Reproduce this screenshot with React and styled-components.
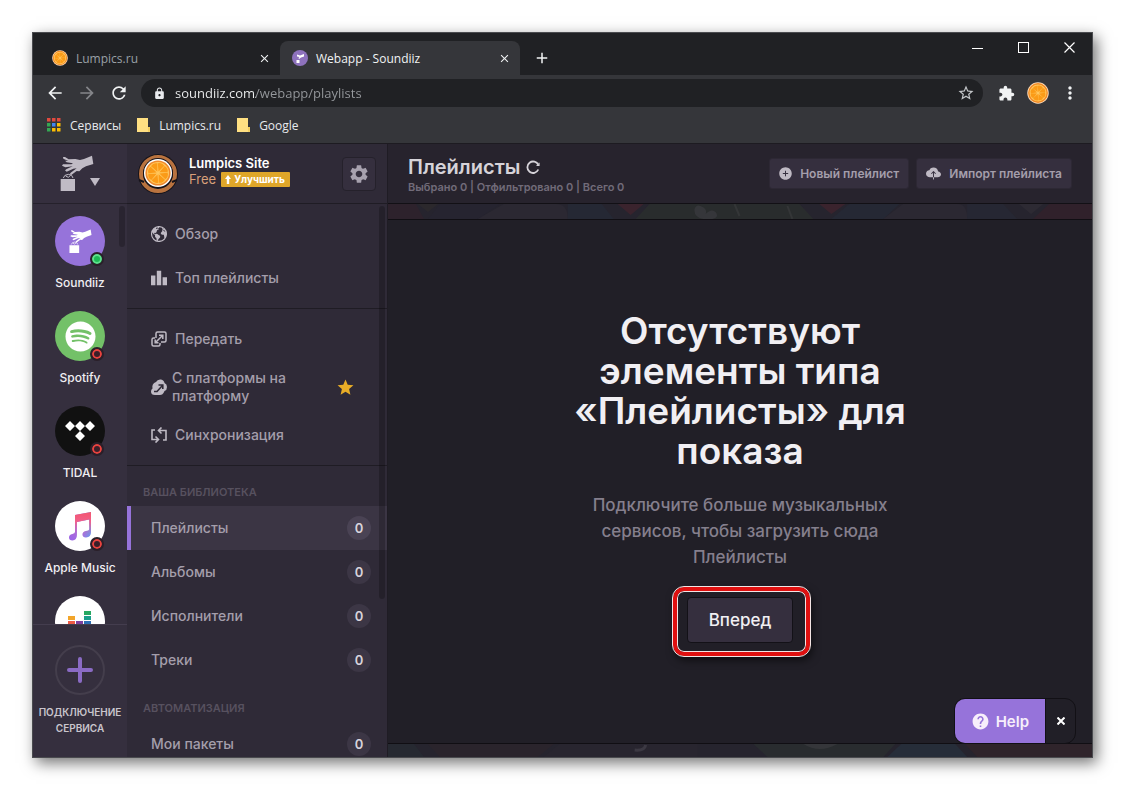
import React from "react";
import styled, { createGlobalStyle, css } from "styled-components";
import {
  MdArrowBack,
  MdArrowForward,
  MdRefresh,
  MdLock,
  MdStarBorder,
  MdExtension,
  MdMoreVert,
  MdAdd,
  MdClose,
  MdSettings,
  MdLeaderboard,
  MdStar,
  MdHelp,
} from "react-icons/md";
import { IoEarth, IoAddCircle, IoCloudUpload } from "react-icons/io5";
import { FaSpotify } from "react-icons/fa";

const GlobalStyle = createGlobalStyle`
  *, *::before, *::after {
    box-sizing: border-box;
  }
  body {
    margin: 0;
    background: #fff;
    font-family: Inter, "Liberation Sans", sans-serif;
  }
  button, input {
    font: inherit;
    color: inherit;
    border: none;
    background: none;
    padding: 0;
    margin: 0;
  }
  button {
    cursor: pointer;
  }
  a {
    color: inherit;
    text-decoration: none;
  }
  h1, h2, p, ul {
    margin: 0;
    padding: 0;
    list-style: none;
  }
  svg {
    display: block;
    flex-shrink: 0;
  }
`;

const Page = styled.div`
  height: 100vh;
  min-height: 480px;
  padding: 32px;
  display: flex;
`;

const BrowserWindow = styled.div`
  flex: 1;
  min-width: 0;
  display: flex;
  flex-direction: column;
  border: 1px solid #4a4b4f;
  background: #35363a;
  box-shadow: 4px 5px 14px rgba(0, 0, 0, 0.55);
  overflow: hidden;
`;

/* ---------- browser ---------- */

const Chrome = styled.header`
  font-family: "Open Sans", "Noto Sans", sans-serif;
  font-size: 12px;
  color: #e8eaed;
  flex-shrink: 0;
`;

const TabBar = styled.div`
  display: flex;
  height: 42px;
  padding: 8px 0 0 7px;
  background: #202124;
`;

const Tab = styled.div`
  display: flex;
  align-items: center;
  gap: 8px;
  width: 240px;
  padding: 0 10px 0 12px;
  border-radius: 8px 8px 0 0;
  color: ${({ $active }) => ($active ? "#f1f3f4" : "#9aa0a6")};
  background: ${({ $active }) => ($active ? "#35363a" : "transparent")};
`;

const TabTitle = styled.span`
  flex: 1;
`;

const IconButton = styled.button`
  display: flex;
  align-items: center;
  justify-content: center;
  width: ${({ $size }) => $size || 20}px;
  height: ${({ $size }) => $size || 20}px;
  color: ${({ $dim }) => ($dim ? "#85868a" : "#f1f3f4")};
`;

const NewTab = styled(IconButton)`
  align-self: center;
  margin-left: 12px;
`;

const WindowControls = styled.div`
  display: flex;
  margin-left: auto;
  height: 12px;
`;

const WindowButton = styled(IconButton)`
  width: 46px;
  height: 12px;
`;

const Toolbar = styled.div`
  display: flex;
  align-items: center;
  gap: 12px;
  height: 36px;
  padding: 0 11px 0 12px;
`;

const Omnibox = styled.label`
  flex: 1;
  display: flex;
  align-items: center;
  gap: 9px;
  height: 28px;
  padding: 0 8px 0 12px;
  border-radius: 14px;
  background: #202124;
`;

/* host part is bright, path part is dimmed */
const UrlInput = styled.input`
  flex: 1;
  min-width: 0;
  height: 20px;
  font-size: 13px;
  outline: none;
  background: linear-gradient(90deg, #f1f3f4 81px, #96999d 81px);
  background-clip: text;
  -webkit-text-fill-color: transparent;
`;

const ToolbarRight = styled.div`
  display: flex;
  align-items: center;
  gap: 10px;
`;

const Bookmarks = styled.nav`
  display: flex;
  align-items: center;
  gap: 16px;
  height: 32px;
  padding: 0 0 4px 14px;
`;

const Bookmark = styled.a`
  display: flex;
  align-items: center;
  gap: 9px;
`;

/* ---------- app ---------- */

const AppBody = styled.div`
  flex: 1;
  min-height: 0;
  display: flex;
  border-top: 1px solid #1d1b21;
`;

const Rail = styled.aside`
  width: 94px;
  flex-shrink: 0;
  display: flex;
  flex-direction: column;
  background: #352f3e;
`;

const RailLogo = styled.button`
  display: flex;
  align-items: center;
  justify-content: center;
  height: 60px;
  flex-shrink: 0;
  color: #c0bbc5;
  border-bottom: 1px solid #25212b;
`;

const LogoGroup = styled.span`
  display: flex;
  align-items: flex-end;
`;

const Caret = styled.span`
  margin: 0 0 6px -4px;
`;

const Scroller = styled.div`
  position: relative;
  flex: 1;
  min-height: 0;
  overflow: hidden;
`;

const ScrollThumb = styled.span`
  position: absolute;
  top: 2px;
  right: 2px;
  width: 6px;
  height: ${({ $height }) => $height};
  border-radius: 3px;
  background: rgba(0, 0, 0, 0.22);
`;

const ServiceList = styled.ul`
  display: flex;
  flex-direction: column;
  gap: 20px;
  padding-top: 12px;
`;

const Service = styled.a`
  display: flex;
  flex-direction: column;
  align-items: center;
  gap: 9px;
  color: #f0eef2;
  font-size: 12px;
  font-weight: 500;
  line-height: 16px;
  white-space: nowrap;
`;

const ServiceLogo = styled.span`
  position: relative;
  display: flex;
  align-items: center;
  justify-content: center;
  width: 50px;
  height: 50px;
  border-radius: 50%;
  color: #fff;
  background: ${({ $color }) => $color};
`;

const Status = styled.span`
  position: absolute;
  right: 1px;
  bottom: 0;
  width: 14px;
  height: 14px;
  border-radius: 50%;
  border: 2px solid #2a1f29;
  background: ${({ $on }) => ($on ? "#1db954" : "#3a1f29")};
  box-shadow: inset 0 0 0 2px ${({ $on }) => ($on ? "#5fe08d" : "#e8433f")};
`;

const Connect = styled.button`
  display: flex;
  flex-direction: column;
  align-items: center;
  gap: 9px;
  height: 133px;
  padding-top: 20px;
  flex-shrink: 0;
  border-top: 1px solid #443d4e;
  color: #c9c5cd;
  font-size: 10px;
  font-weight: 600;
  line-height: 16px;
`;

const ConnectCircle = styled.span`
  display: flex;
  align-items: center;
  justify-content: center;
  width: 50px;
  height: 50px;
  flex-shrink: 0;
  border: 2px solid #443e4c;
  border-radius: 50%;
`;

const Sidebar = styled.aside`
  width: 261px;
  flex-shrink: 0;
  display: flex;
  flex-direction: column;
  background: #2f2a37;
  border-right: 1px solid #1f1c24;
`;

const Profile = styled.div`
  display: flex;
  align-items: center;
  gap: 11px;
  height: 60px;
  padding: 0 11px 0 11px;
  flex-shrink: 0;
  border-bottom: 1px solid #1f1c24;
`;

const ProfileText = styled.div`
  flex: 1;
  padding-bottom: 5px;
  font-size: 13px;
  line-height: 16px;
`;

const UserName = styled.div`
  color: #fff;
  font-weight: 600;
`;

const Plan = styled.div`
  display: flex;
  align-items: center;
  gap: 5px;
  color: #d9a07a;
`;

const Upgrade = styled.button`
  display: flex;
  align-items: center;
  gap: 3px;
  height: 15px;
  padding: 0 5px 0 4px;
  border-radius: 1px;
  background: #dfa629;
  color: #fff;
  font-size: 10px;
  font-weight: 700;
`;

const SettingsButton = styled.button`
  display: flex;
  align-items: center;
  justify-content: center;
  width: 34px;
  height: 34px;
  border: 1px solid #25212b;
  border-radius: 4px;
  background: #352f3e;
  color: #a7a1ae;
`;

const NavGroup = styled.nav`
  padding: ${({ $flush }) => ($flush ? 0 : "8px 0")};
  border-bottom: ${({ $flush }) => ($flush ? "none" : "1px solid #1f1c24")};
`;

const NavTitle = styled.h2`
  padding: 18px 16px 6px;
  color: #57515f;
  font-size: 11px;
  font-weight: 600;
  line-height: 16px;
`;

const NavItem = styled.a`
  display: flex;
  align-items: center;
  gap: ${({ $tall }) => ($tall ? 5 : 8)}px;
  height: ${({ $tall }) => ($tall ? 52 : 44)}px;
  padding: 0 16px 0 24px;
  color: #a49eab;
  font-size: 14px;
  font-weight: 500;
  line-height: 18px;

  > svg:first-child {
    color: #bfbac4;
  }

  ${({ $active }) =>
    $active &&
    css`
      padding-left: 20px;
      border-left: 4px solid #9673da;
      background: #3b3544;
    `}
`;

const NavLabel = styled.span`
  flex: 1;
`;

const StarMark = styled.span`
  margin-right: 16px;
  color: #e9ad27;
`;

const Count = styled.span`
  width: 24px;
  height: 24px;
  border-radius: 50%;
  background: ${({ $active }) => ($active ? "#4a4354" : "#3c3645")};
  color: #d8d4dc;
  font-size: 13px;
  font-weight: 600;
  line-height: 24px;
  text-align: center;
`;

const Main = styled.main`
  position: relative;
  flex: 1;
  min-width: 0;
  display: flex;
  flex-direction: column;
  background: #211f27;
`;

const MainHeader = styled.div`
  display: flex;
  align-items: center;
  gap: 7px;
  height: 60px;
  padding: 0 20px;
  flex-shrink: 0;
  background: #27232d;
  border-bottom: 1px solid #121015;
`;

const Heading = styled.div`
  flex: 1;
  padding-top: 3px;
`;

const TitleRow = styled.div`
  display: flex;
  align-items: center;
  gap: 6px;
`;

const Title = styled.h1`
  color: #d6d3d9;
  font-size: 20px;
  font-weight: 600;
  line-height: 24px;
`;

const Summary = styled.p`
  color: #716b79;
  font-size: 11px;
  font-weight: 600;
  line-height: 16px;
`;

const ActionButton = styled.button`
  display: flex;
  align-items: center;
  gap: 8px;
  height: 31px;
  padding: 0 9px;
  border: 1px solid #2d2834;
  border-radius: 3px;
  background: #352f3e;
  color: #a49eab;
  font-size: 12px;
  font-weight: 600;

  svg {
    color: #bfbac4;
  }
`;

const PatternStrip = styled.div`
  height: ${({ $height }) => $height}px;
  flex-shrink: 0;
  overflow: hidden;
  background: #26242e;
  border: 0 solid #100e13;
  border-width: ${({ $bottom }) => ($bottom ? "1px 0 0" : "0 0 1px")};

  svg {
    opacity: 0.75;
  }
`;

const Empty = styled.section`
  flex: 1;
  min-height: 0;
  display: flex;
  flex-direction: column;
  align-items: center;
  justify-content: center;
  padding-bottom: 10px;
  text-align: center;
`;

const EmptyTitle = styled.h2`
  max-width: 360px;
  color: #f1eff3;
  font-size: 37px;
  font-weight: 600;
  line-height: 40px;
`;

const EmptyText = styled.p`
  max-width: 310px;
  margin: 21px 0 27px;
  color: #857f8d;
  font-size: 17px;
  font-weight: 500;
  line-height: 26px;
`;

const Highlight = styled.div`
  position: relative;

  &::after {
    content: "";
    position: absolute;
    inset: -10px -17px -13px -14px;
    border: 4px solid #e01010;
    border-radius: 11px;
    outline: 1px solid #f3e4e4;
    box-shadow: inset 0 0 0 1px #f3e4e4, 2px 4px 8px rgba(0, 0, 0, 0.6);
    pointer-events: none;
  }
`;

const ForwardButton = styled.button`
  height: 46px;
  padding: 0 21px;
  border: 1px solid #131117;
  border-radius: 4px;
  background: #352f3e;
  color: #f1eff3;
  font-size: 17px;
  font-weight: 500;
`;

const HelpWidget = styled.div`
  position: absolute;
  right: 16px;
  bottom: 13px;
  display: flex;
  height: 46px;
  border: 1px solid #121015;
  border-radius: 11px;
  background: #211f27;
  overflow: hidden;
`;

const HelpButton = styled.button`
  display: flex;
  align-items: center;
  gap: 6px;
  padding: 0 16px;
  background: #9673da;
  border-right: 1px solid #121015;
  color: #f7eefb;
  font-size: 15px;
  font-weight: 600;
`;

const HelpClose = styled.button`
  display: flex;
  align-items: center;
  justify-content: center;
  width: 29px;
  color: #fff;
`;

/* ---------- drawings ---------- */

const Orange = ({ size }) => (
  <svg width={size} height={size} viewBox="0 0 40 40" aria-hidden="true">
    <circle cx="20" cy="20" r="19.5" fill="#ffe0bd" />
    <circle cx="20" cy="20" r="18" fill="#f28a25" />
    <circle cx="20" cy="20" r="15.5" fill="#ffc65c" />
    {[0, 45, 90, 135, 180, 225, 270, 315].map((angle) => (
      <path
        key={angle}
        d="M20 18 L15 8 Q20 4 25 8Z"
        fill="#fb9b17"
        transform={`rotate(${angle + 20} 20 20)`}
      />
    ))}
  </svg>
);

const Avatar = () => (
  <svg width="40" height="40" viewBox="0 0 40 40" aria-hidden="true">
    <circle cx="20" cy="20" r="20" fill="#17141b" />
    <circle cx="20" cy="20" r="17" fill="none" stroke="#b9733f" strokeWidth="4" />
    <path d="M1 26 l5 2 M39 26 l-5 2" stroke="#17141b" strokeWidth="2" />
    <circle cx="20" cy="19" r="15" fill="#17141b" />
    <circle cx="20" cy="19" r="14" fill="#fff" />
    <circle cx="20" cy="19" r="12.6" fill="#ef8a2c" />
    <circle cx="20" cy="19" r="11" fill="#ffc65c" />
    {[0, 45, 90, 135, 180, 225, 270, 315].map((angle) => (
      <path
        key={angle}
        d="M20 17.5 L16.5 10 Q20 7.5 23.5 10Z"
        fill="#fb9b17"
        transform={`rotate(${angle + 20} 20 19)`}
      />
    ))}
  </svg>
);

const SoundiizLogo = ({ width }) => (
  <svg width={width} viewBox="88 45 102 110" fill="currentColor" aria-hidden="true">
    <path d="M97 51 L103 51 L114 58 L134 57 L148 60 L160 57 L184 47 L188 72 L166 79 L155 85 L146 94 L138 93 L122 105 L117 103 L120 98 L138 85 L128 86 L108 95 L103 91 L108 87 L126 79 L104 82 L94 77 L97 73 L122 73 L127 70 L108 67 L103 62 L113 63 L98 56Z" />
    <path
      d="M98 114 Q100 104 113 103 Q126 104 127 114 M105 108 l8 4 l7 -6"
      fill="none"
      stroke="currentColor"
      strokeWidth="3"
    />
    <path d="M90 117 h43 v36 h-43Z" />
  </svg>
);

const SoundiizFavicon = () => (
  <svg width="16" height="16" viewBox="0 0 16 16" aria-hidden="true">
    <circle cx="8" cy="8" r="8" fill="#8e72bd" />
    <path d="M5 4.5 l3 1 4 -1.500 v2.500 l-3 1 -2 1.500 -.5 -1 1 -1 -2.500 -.5Z M4.5 10 h3 v3 h-3Z" fill="#fff" />
  </svg>
);

const AppsIcon = () => {
  const colors = ["#e04a3f", "#e04a3f", "#e04a3f", "#34a853", "#4285f4", "#fbbc05", "#34a853", "#fbbc05", "#fbbc05"];
  return (
    <svg width="14" height="14" viewBox="0 0 14 14" aria-hidden="true">
      {colors.map((color, i) => (
        <rect key={i} x={(i % 3) * 5} y={Math.floor(i / 3) * 5} width="3.5" height="3.5" fill={color} />
      ))}
    </svg>
  );
};

const FolderIcon = () => (
  <svg width="13" height="14" viewBox="0 0 13 14" aria-hidden="true">
    <path d="M0 0 h11 v9 h2 v5 h-13Z" fill="#ffe082" />
    <path d="M11 9 v5 h2 v-5Z" fill="#f3cf62" />
  </svg>
);

const TidalLogo = () => (
  <svg width="30" height="20" viewBox="0 0 30 20" fill="#fff" aria-hidden="true">
    <path d="M5 0 l5 5 -5 5 -5 -5Z M15 0 l5 5 -5 5 -5 -5Z M25 0 l5 5 -5 5 -5 -5Z M15 10 l5 5 -5 5 -5 -5Z" />
  </svg>
);

const AppleMusicLogo = () => (
  <svg width="24" height="30" viewBox="0 0 24 30" aria-hidden="true">
    <defs>
      <linearGradient id="note" x1="0" y1="1" x2="1" y2="1">
        <stop offset="0" stopColor="#9b62e8" />
        <stop offset="0.6" stopColor="#a870e0" />
        <stop offset="1" stopColor="#53a8f5" />
      </linearGradient>
      <linearGradient id="noteTop" x1="0" y1="0" x2="0" y2="1">
        <stop offset="0" stopColor="#f4566f" />
        <stop offset="0.35" stopColor="#f0608c" />
        <stop offset="1" stopColor="#9b6fe8" stopOpacity="0" />
      </linearGradient>
    </defs>
    {["url(#note)", "url(#noteTop)"].map((fill) => (
      <path
        key={fill}
        fill={fill}
        d="M7 4 L23 1 V21 Q23 26 18 26.5 Q14.5 26.5 14.5 23.5 Q14.5 20.5 18 20 Q21.2 19.800 21.2 18 V8.5 L8.900 11 V24 Q8.900 29 4.5 29.5 Q1 29.5 1 26.5 Q1 23.5 4.5 23 Q7 22.5 7 21Z"
      />
    ))}
  </svg>
);

const DeezerLogo = () => {
  const bars = [
    [0, 12, "#c2549b"], [8, 12, "#8750a8"], [16, 12, "#5d4fa5"], [0, 7, "#ef5b45"],
    [8, 7, "#7d3fa0"], [16, 7, "#2c6fb5"], [0, 2, "#f2a52a"], [16, 2, "#1b9e8b"], [16, -3, "#27a862"],
  ];
  return (
    <svg width="24" height="20" viewBox="0 -3 24 20" aria-hidden="true">
      {bars.map(([x, y, color]) => (
        <rect key={`${x}/${y}`} x={x} y={y} width="7" height="4" fill={color} />
      ))}
    </svg>
  );
};

const TransferIcon = () => (
  <svg width="16" height="16" viewBox="0 0 16 16" fill="none" stroke="currentColor" strokeWidth="1.5" aria-hidden="true">
    <path d="M5 7 V2.5 Q5 1 6.5 1 H13.5 Q15 1 15 2.5 V9.5 Q15 11 13.5 11 H10" />
    <path d="M4 7 H2.5 Q1 7 1 8.5 V13.5 Q1 15 2.5 15 H7.5 Q9 15 9 13.5 V12" />
    <path d="M4.5 11.5 L11.5 4.5 M8 4.2 H11.8 V8 M4.2 8.5 V11.8 H7.5" />
  </svg>
);

const PlatformIcon = () => (
  <svg width="16" height="16" viewBox="0 0 16 16" aria-hidden="true">
    <path
      d="M5 3 Q6.5 0 10 .5 Q13 1 13.5 4 Q16 5 16 8 Q16 11 13.5 12 L12.5 14 Q11.5 16 9 16 H4 Q0 16 0 12.5 Q0 10.5 1.5 9.5 Q.5 4.5 5 3Z"
      fill="currentColor"
    />
    <path d="M3 12.5 H6 L11 7 M7.5 6 H11.8 V10" fill="none" stroke="#2f2a37" strokeWidth="1.6" />
  </svg>
);

const SyncIcon = () => (
  <svg width="16" height="16" viewBox="0 0 16 16" fill="none" stroke="currentColor" strokeWidth="1.6" aria-hidden="true">
    <path d="M4 3 H1 V12.5 H7 M4.5 9.5 L7.5 12.5 L4.5 15.5" />
    <path d="M12 13 H15 V3.5 H8 M10.5 .5 L7.5 3.5 L10.5 6.5" />
  </svg>
);

const ReloadIcon = () => (
  <svg width="14" height="14" viewBox="0 0 14 14" fill="none" stroke="#d6d3d9" strokeWidth="1.8" aria-hidden="true">
    <path d="M12.3 5 A5.7 5.7 0 1 0 12.3 9.5" />
    <path d="M13 2.8 V5.5 H10.5" strokeWidth="1.2" />
  </svg>
);

const UpArrow = () => (
  <svg width="6" height="9" viewBox="0 0 6 9" fill="#fff" aria-hidden="true">
    <path d="M3 0 L6 4 H4.2 V9 H1.8 V4 H0Z" />
  </svg>
);

const PlusIcon = () => (
  <svg width="26" height="26" viewBox="0 0 26 26" stroke="#8a6bc4" strokeWidth="4" strokeLinecap="round" aria-hidden="true">
    <path d="M13 2 V24 M2 13 H24" />
  </svg>
);

const CrossIcon = () => (
  <svg width="8" height="8" viewBox="0 0 8 8" stroke="#fff" strokeWidth="2" aria-hidden="true">
    <path d="M.5 .5 L7.5 7.5 M7.5 .5 L.5 7.5" />
  </svg>
);

const TopPattern = () => (
  <svg width="100%" height="15" viewBox="0 0 705 15" preserveAspectRatio="none" aria-hidden="true">
    <path d="M0 0 H28 L36 15 H0Z" fill="#30222c" />
    <path d="M30 0 H50 L40 8Z" fill="#2d2a2c" />
    <path d="M52 0 H112 L90 15 H40Z" fill="#262431" />
    <path d="M116 0 H168 Q180 0 180 15 H90Z" fill="#2d2a34" />
    <path d="M180 0 H214 L226 15 H180Z" fill="#252a37" />
    <path d="M230 0 H256 L243 11Z" fill="#41232d" />
    <path d="M262 0 H412 L426 15 H248Z" fill="#2b2f2d" />
    <path d="M307 5 Q309 -1 315 3 Q320 6 318 10 Q324 4 328 8 Q332 13 325 15 H316 Q306 13 307 5Z" fill="#3b3d3f" />
    <path d="M347 0 L352 12 M400 2 L405 15" stroke="#393c3b" strokeWidth="2" />
    <path d="M432 0 H458 L444 10Z" fill="#41232d" />
    <path d="M462 0 H512 L496 15 H444Z" fill="#252a37" />
    <path d="M516 0 H570 Q580 0 580 15 H496Z" fill="#2d2a34" />
    <path d="M580 0 H616 L630 15 H580Z" fill="#262935" />
    <path d="M632 0 H656 L644 10Z" fill="#302d35" />
    <path d="M662 0 H705 V15 H646Z" fill="#34202a" />
  </svg>
);

const BottomPattern = () => (
  <svg width="100%" height="13" viewBox="0 0 705 13" preserveAspectRatio="none" aria-hidden="true">
    <path d="M0 0 H26 L36 13 H0Z" fill="#262b33" />
    <path d="M40 0 H166 L150 13 H52Z" fill="#2c252c" />
    <path d="M172 0 H310 V13 H156Z" fill="#292630" />
    <path d="M247 6 Q257 7 258 1" stroke="#44404a" strokeWidth="3" fill="none" />
    <path d="M366 0 H508 L496 13 H380Z" fill="#2a2f30" />
    <path d="M416 0 Q432 10 450 0Z" fill="#3a3d3e" />
    <path d="M514 0 H568 L580 13 H500Z" fill="#26303d" />
    <path d="M578 0 H705 V13 H590Z" fill="#33242a" />
  </svg>
);

// the last entry is only half visible above the connect block
const services = [
  { id: "soundiiz", name: "Soundiiz", color: "#9673da", logo: <SoundiizLogo width={23} />, on: true },
  { id: "spotify", name: "Spotify", color: "#73c168", logo: <FaSpotify size={31} /> },
  { id: "tidal", name: "TIDAL", color: "#111", logo: <TidalLogo /> },
  { id: "apple", name: "Apple Music", color: "#fff", logo: <AppleMusicLogo /> },
  { id: "deezer", color: "#fff", logo: <DeezerLogo /> },
];

const library = ["Плейлисты", "Альбомы", "Исполнители", "Треки"];

const BrowserChrome = () => (
  <Chrome>
    <TabBar>
      <Tab>
        <Orange size={16} />
        <TabTitle>Lumpics.ru</TabTitle>
        <IconButton $size={12} aria-label="Закрыть вкладку">
          <MdClose size={13} />
        </IconButton>
      </Tab>
      <Tab $active>
        <SoundiizFavicon />
        <TabTitle>Webapp - Soundiiz</TabTitle>
        <IconButton $size={12} aria-label="Закрыть вкладку">
          <MdClose size={13} />
        </IconButton>
      </Tab>
      <NewTab aria-label="Новая вкладка">
        <MdAdd size={18} />
      </NewTab>
      <WindowControls>
        <WindowButton aria-label="Свернуть">
          <svg width="11" height="11" stroke="#fff">
            <path d="M0 6.5 H11" />
          </svg>
        </WindowButton>
        <WindowButton aria-label="Развернуть">
          <svg width="11" height="11" stroke="#fff" fill="none">
            <rect x=".5" y=".5" width="10" height="10" />
          </svg>
        </WindowButton>
        <WindowButton aria-label="Закрыть">
          <svg width="11" height="11" stroke="#fff">
            <path d="M.5 .5 L10.5 10.5 M10.5 .5 L.5 10.5" strokeWidth="1.2" />
          </svg>
        </WindowButton>
      </WindowControls>
    </TabBar>
    <Toolbar>
      <IconButton aria-label="Назад">
        <MdArrowBack size={20} />
      </IconButton>
      <IconButton $dim aria-label="Вперёд">
        <MdArrowForward size={20} />
      </IconButton>
      <IconButton aria-label="Обновить">
        <MdRefresh size={20} />
      </IconButton>
      <Omnibox>
        <MdLock size={13} />
        <UrlInput aria-label="Адрес" defaultValue="soundiiz.com/webapp/playlists" />
        <MdStarBorder size={18} color="#c4c7ca" />
      </Omnibox>
      <ToolbarRight>
        <IconButton $size={22} aria-label="Расширения">
          <MdExtension size={17} />
        </IconButton>
        <IconButton $size={22} aria-label="Профиль">
          <Orange size={22} />
        </IconButton>
        <IconButton $size={22} aria-label="Меню">
          <MdMoreVert size={20} />
        </IconButton>
      </ToolbarRight>
    </Toolbar>
    <Bookmarks>
      <Bookmark href="#">
        <AppsIcon />
        Сервисы
      </Bookmark>
      <Bookmark href="#">
        <FolderIcon />
        Lumpics.ru
      </Bookmark>
      <Bookmark href="#">
        <FolderIcon />
        Google
      </Bookmark>
    </Bookmarks>
  </Chrome>
);

const ServicesRail = () => (
  <Rail>
    <RailLogo aria-label="Soundiiz">
      <LogoGroup>
        <SoundiizLogo width={34} />
        <Caret>
          <svg width="10" height="8" viewBox="0 0 10 8" fill="currentColor">
            <path d="M0 0 H10 L5 8Z" />
          </svg>
        </Caret>
      </LogoGroup>
    </RailLogo>
    <Scroller>
      <ServiceList>
        {services.map((service) => (
          <li key={service.id}>
            <Service href="#">
              <ServiceLogo $color={service.color}>
                {service.logo}
                <Status $on={service.on} />
              </ServiceLogo>
              {service.name}
            </Service>
          </li>
        ))}
      </ServiceList>
      <ScrollThumb $height="41px" />
    </Scroller>
    <Connect>
      <ConnectCircle>
        <PlusIcon />
      </ConnectCircle>
      <span>
        ПОДКЛЮЧЕНИЕ
        <br />
        СЕРВИСА
      </span>
    </Connect>
  </Rail>
);

const SideMenu = () => (
  <Sidebar>
    <Profile>
      <Avatar />
      <ProfileText>
        <UserName>Lumpics Site</UserName>
        <Plan>
          Free
          <Upgrade>
            <UpArrow />
            Улучшить
          </Upgrade>
        </Plan>
      </ProfileText>
      <SettingsButton aria-label="Настройки">
        <MdSettings size={22} />
      </SettingsButton>
    </Profile>
    <Scroller>
      <NavGroup>
        <NavItem href="#">
          <IoEarth size={16} viewBox="32 32 448 448" />
          <NavLabel>Обзор</NavLabel>
        </NavItem>
        <NavItem href="#">
          <MdLeaderboard size={16} viewBox="2 3 20 18" />
          <NavLabel>Топ плейлисты</NavLabel>
        </NavItem>
      </NavGroup>
      <NavGroup>
        <NavItem href="#">
          <TransferIcon />
          <NavLabel>Передать</NavLabel>
        </NavItem>
        <NavItem href="#" $tall>
          <PlatformIcon />
          <NavLabel>
            С платформы на
            <br />
            платформу
          </NavLabel>
          <StarMark>
            <MdStar size={19} />
          </StarMark>
        </NavItem>
        <NavItem href="#">
          <SyncIcon />
          <NavLabel>Синхронизация</NavLabel>
        </NavItem>
      </NavGroup>
      <NavGroup $flush>
        <NavTitle>ВАША БИБЛИОТЕКА</NavTitle>
        {library.map((name, index) => (
          <NavItem href="#" key={name} $active={index === 0}>
            <NavLabel>{name}</NavLabel>
            <Count $active={index === 0}>0</Count>
          </NavItem>
        ))}
        <NavTitle>АВТОМАТИЗАЦИЯ</NavTitle>
        <NavItem href="#">
          <NavLabel>Мои пакеты</NavLabel>
          <Count>0</Count>
        </NavItem>
      </NavGroup>
      <ScrollThumb $height="71%" />
    </Scroller>
  </Sidebar>
);

const App = () => {
  return (
    <>
      <GlobalStyle />
      <Page>
        <BrowserWindow>
          <BrowserChrome />
          <AppBody>
            <ServicesRail />
            <SideMenu />
            <Main>
              <MainHeader>
                <Heading>
                  <TitleRow>
                    <Title>Плейлисты</Title>
                    <ReloadIcon />
                  </TitleRow>
                  <Summary>Выбрано 0 | Отфильтровано 0 | Всего 0</Summary>
                </Heading>
                <ActionButton>
                  <IoAddCircle size={13} viewBox="40 40 432 432" />
                  Новый плейлист
                </ActionButton>
                <ActionButton>
                  <IoCloudUpload size={15} />
                  Импорт плейлиста
                </ActionButton>
              </MainHeader>
              <PatternStrip $height={16}>
                <TopPattern />
              </PatternStrip>
              <Empty>
                <EmptyTitle>Отсутствуют элементы типа «Плейлисты» для показа</EmptyTitle>
                <EmptyText>
                  Подключите больше музыкальных сервисов, чтобы загрузить сюда Плейлисты
                </EmptyText>
                <Highlight>
                  <ForwardButton>Вперед</ForwardButton>
                </Highlight>
              </Empty>
              <PatternStrip $height={14} $bottom>
                <BottomPattern />
              </PatternStrip>
              <HelpWidget>
                <HelpButton>
                  <MdHelp size={19} />
                  Help
                </HelpButton>
                <HelpClose aria-label="Закрыть">
                  <CrossIcon />
                </HelpClose>
              </HelpWidget>
            </Main>
          </AppBody>
        </BrowserWindow>
      </Page>
    </>
  );
};

export default App;
